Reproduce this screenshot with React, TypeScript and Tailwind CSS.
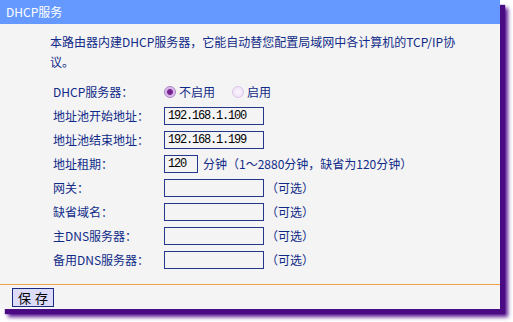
import React from "react";

const FONT = "font-['SimSun','Noto_Sans_CJK_SC',sans-serif]";

function Radio({ checked }: { checked?: boolean }) {
  return (
    <span
      className={`inline-block w-[12px] h-[12px] rounded-full border ${
        checked
          ? "border-[#a97fc6] bg-[radial-gradient(circle,#6d1a86_0,#7e2a96_2.5px,#d6b3e6_3.5px,#efe0f6_100%)]"
          : "border-[#dcc4ea] bg-[radial-gradient(circle,#fbf6fd_0,#eddcf5_100%)]"
      }`}
    />
  );
}

function Field({ value = "", w = "w-[100px]" }: { value?: string; w?: string }) {
  return (
    <div
      className={`${w} h-[18px] border border-[#24368c] bg-[#f4f4f4] px-[3px] font-['Liberation_Mono',monospace] text-[12px] tracking-[-1.2px] leading-[16px] text-black`}
    >
      {value}
    </div>
  );
}

function Row({ label, children }: { label: string; children: React.ReactNode }) {
  return (
    <div className="flex items-center h-[24px]">
      <div className="w-[111px] shrink-0">{label}</div>
      <div className="flex items-center">{children}</div>
    </div>
  );
}

export default function App() {
  return (
    <div className={`w-[513px] h-[322px] bg-white ${FONT}`}>
      <div className="w-[500px] h-[309px] bg-[#f4f4f4] flex flex-col shadow-[5px_5px_1px_#4a0a84,8px_8px_4px_#5a1a92] text-[12px] text-[#102a88]">
        <div className="h-[24px] bg-[#6699ff] text-white flex items-center pl-[6px]">DHCP服务</div>

        <p className="pl-[50px] pt-[8px] leading-[20px]">
          本路由器内建DHCP服务器，它能自动替您配置局域网中各计算机的TCP/IP协
          <br />
          议。
        </p>

        <div className="pl-[53px] pt-[8px] flex flex-col">
          <Row label="DHCP服务器：">
            <div className="flex items-center gap-[3px]">
              <Radio checked />
              <span>不启用</span>
              <span className="w-[11px]" />
              <Radio />
              <span>启用</span>
            </div>
          </Row>
          <Row label="地址池开始地址：">
            <Field value="192.168.1.100" />
          </Row>
          <Row label="地址池结束地址：">
            <Field value="192.168.1.199" />
          </Row>
          <Row label="地址租期：">
            <Field value="120" w="w-[34px]" />
            <span className="pl-[5px]">分钟（1～2880分钟，缺省为120分钟）</span>
          </Row>
          <Row label="网关：">
            <Field />
            <span className="pl-[2px]">（可选）</span>
          </Row>
          <Row label="缺省域名：">
            <Field />
            <span className="pl-[2px]">（可选）</span>
          </Row>
          <Row label="主DNS服务器：">
            <Field />
            <span className="pl-[2px]">（可选）</span>
          </Row>
          <Row label="备用DNS服务器：">
            <Field />
            <span className="pl-[2px]">（可选）</span>
          </Row>
        </div>

        <div className="mt-[12px] h-[1px] bg-[#f0a24a]" />

        <div className="pl-[12px] pt-[3px]">
          <button className="w-[42px] h-[19px] border border-[#1a2a80] bg-[#dcdcfa] text-black text-[13px] leading-[17px] tracking-[4px] pl-[4px]">
            保存
          </button>
        </div>
      </div>
    </div>
  );
}
